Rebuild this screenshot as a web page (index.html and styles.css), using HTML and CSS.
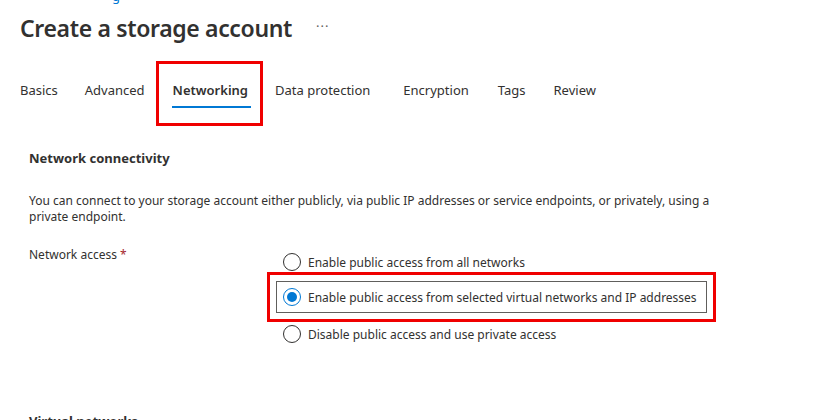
FILE: index.html
```html
<!DOCTYPE html>
<html>
<head>
<meta charset="utf-8">
<link rel="stylesheet" href="styles.css">
</head>
<body>
<div class="crumb"><span class="crumb-link">g</span></div>
<header class="head">
  <h1 class="title">Create a storage account</h1>
  <span class="more">···</span>
</header>
<nav class="tabs">
  <span class="tab">Basics</span>
  <span class="tab">Advanced</span>
  <span class="tab active">Networking</span>
  <span class="tab">Data protection</span>
  <span class="tab tab-enc">Encryption</span>
  <span class="tab tab-tags">Tags</span>
  <span class="tab tab-review">Review</span>
</nav>
<main class="content">
  <h2 class="section">Network connectivity</h2>
  <p class="desc">You can connect to your storage account either publicly, via public IP addresses or service endpoints, or privately, using a private endpoint.</p>
  <div class="field">
    <div class="label">Network access <span class="req">*</span></div>
    <div class="options">
      <label class="opt"><span class="radio"></span>Enable public access from all networks</label>
      <label class="opt selected"><span class="radio on"></span>Enable public access from selected virtual networks and IP addresses</label>
      <label class="opt"><span class="radio"></span>Disable public access and use private access</label>
    </div>
  </div>
  <h2 class="section section2">Virtual networks</h2>
</main>
</body>
</html>
```
FILE: styles.css
```css
* { box-sizing: border-box; }
body {
  margin: 0;
  font-family: "Segoe UI", "Noto Sans", sans-serif;
  color: #323130;
  background: #fff;
  overflow: hidden;
  height: 420px;
}
.crumb {
  height: 6px;
  padding-left: 112px;
  font-size: 13px;
  line-height: 0;
  overflow: hidden;
}
.crumb-link { color: #0078d4; position: relative; top: -4px; }
.head {
  display: flex;
  align-items: center;
  padding-left: 20px;
  height: 44px;
}
.title {
  margin: 0;
  font-size: 23px;
  font-weight: 600;
  letter-spacing: -0.35px;
}
.more {
  margin-left: 24px;
  font-size: 13px;
  letter-spacing: 1px;
  color: #605e5c;
  position: relative;
  top: -2px;
}
.tabs {
  display: flex;
  padding-left: 20px;
  margin-top: 12px;
  height: 56px;
  align-items: center;
  gap: 27px;
}
.tab {
  font-size: 13px;
  line-height: 18px;
  position: relative;
  white-space: nowrap;
}
.tab:nth-child(3) { margin-left: 1px; }
.tab-enc { margin-left: 6px; }
.tab-tags { margin-left: 2px; }
.tab-review { margin-left: 1px; }
.tab.active {
  font-weight: 600;
}
.tab.active::before {
  content: "";
  position: absolute;
  left: -17px;
  right: -15px;
  top: -20px;
  bottom: -27px;
  border: 3px solid #f00000;
}
.tab.active::after {
  content: "";
  position: absolute;
  left: -1px;
  right: -3px;
  bottom: -9px;
  height: 2px;
  background: #0078d4;
}
.content {
  padding-left: 29px;
  padding-top: 31px;
}
.section {
  margin: 0;
  font-size: 13px;
  font-weight: 700;
}
.desc {
  margin: 26px 0 0;
  font-size: 12px;
  line-height: 16px;
  max-width: 710px;
}
.field {
  display: flex;
  margin-top: 21px;
}
.label {
  width: 247px;
  font-size: 12px;
  padding-top: 0;
}
.req { color: #a4262c; }
.options {
  display: flex;
  flex-direction: column;
  align-items: flex-start;
  padding-top: 0;
}
.opt {
  display: flex;
  align-items: center;
  font-size: 12px;
  height: 32px;
  padding: 0 6px;
  border: 1px solid transparent;
  white-space: nowrap;
}
.opt.selected {
  border-color: #605e5c;
  outline: 3px solid #f00000;
  outline-offset: 6px;
  margin-top: 3px;
  width: 431px;
}
.opt.selected + .opt { margin-top: 5px; }
.radio {
  width: 18px;
  height: 18px;
  border: 1px solid #323130;
  border-radius: 50%;
  margin-right: 7px;
  flex: none;
  display: flex;
  align-items: center;
  justify-content: center;
}
.radio.on { border-color: #0078d4; }
.radio.on::after {
  content: "";
  width: 10px;
  height: 10px;
  border-radius: 50%;
  background: #0078d4;
}
.section2 { margin-top: 62px; }
```
